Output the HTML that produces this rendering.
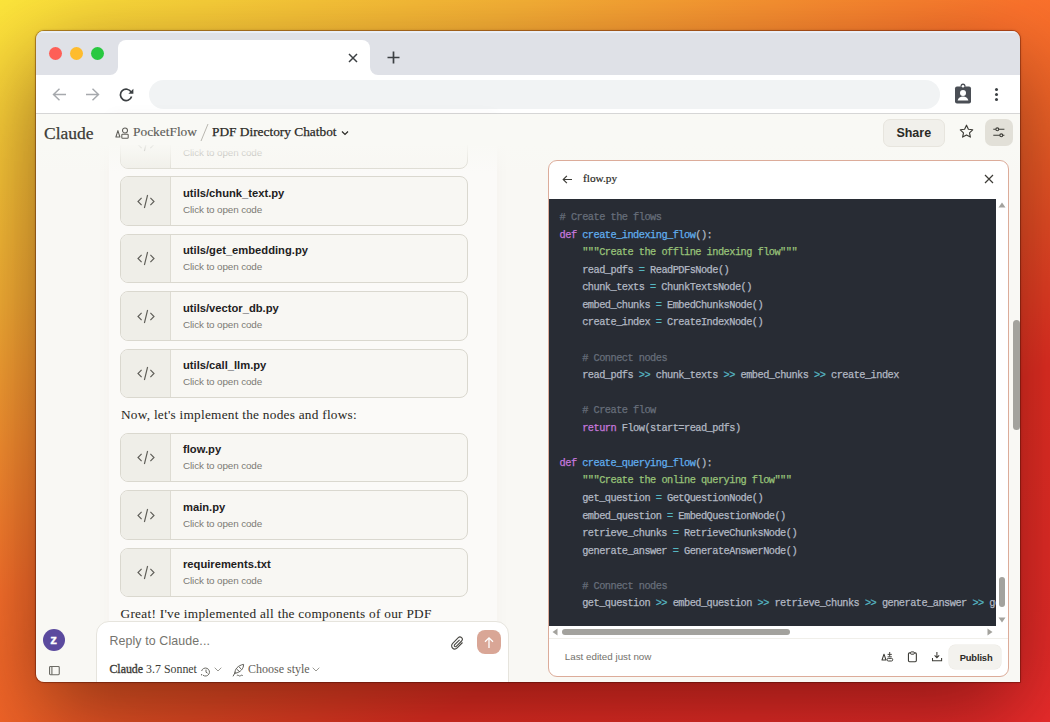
<!DOCTYPE html>
<html><head><meta charset="utf-8">
<style>
*{margin:0;padding:0;box-sizing:border-box}
html,body{width:1050px;height:722px;overflow:hidden}
body{position:relative;font-family:"Liberation Sans",sans-serif;
background:linear-gradient(150deg,#fde63b 0%,#f8b236 23%,#fc722c 45%,#f26428 55%,#ec5026 62%,#ea3024 73%,#ec2c2c 100%);}
.a{position:absolute}
.shadow{position:absolute;left:36px;top:31px;width:984px;height:651px;border-radius:8px 8px 0 8px;box-shadow:0 30px 90px 0 rgba(40,0,0,.5),0 0 3px rgba(60,10,0,.35),0 0 0 1px rgba(90,20,0,.35)}
.win{position:absolute;left:0;top:0;width:1050px;height:722px;clip-path:inset(31px 30px 40px 36px round 8px 8px 0 8px);}
.serif{font-family:"Liberation Serif",serif}
.mono{font-family:"Liberation Mono",monospace}
.card{position:absolute;left:120px;width:348px;height:49.5px;border:1px solid #dad8cf;border-radius:8px;background:#f8f7f3;overflow:hidden}
.card .ic{position:absolute;left:0;top:0;width:50px;height:100%;background:#efeee8;border-right:1px solid #dedcd3}
.card .ic svg{position:absolute;left:16px;top:16.5px}
.card .t{position:absolute;left:62px;top:8.5px;font-weight:700;font-size:11.2px;color:#22211d;white-space:nowrap;line-height:14px}
.card .s{position:absolute;left:62px;top:25.2px;font-size:9.9px;letter-spacing:-0.12px;color:#7b7a73;white-space:nowrap;line-height:14px}
.code{position:absolute;left:549px;top:198.5px;width:447px;height:427.2px;background:#282c34;overflow:hidden}
.code pre{position:absolute;left:10.6px;top:10.5px;font-family:"Liberation Mono",monospace;font-size:10.3px;letter-spacing:-0.525px;-webkit-text-stroke:0.25px currentColor;line-height:17.57px;color:#b2b8c3;white-space:pre}
.cm{color:#676e7a}.kw{color:#c678dd}.fn{color:#61aeee}.st{color:#98c379}.op{color:#56b6c2}
</style></head><body>
<div class="shadow"></div>
<div class="win">
  <!-- tab bar -->
  <div class="a" style="left:36px;top:31px;width:984px;height:44px;background:#dfe1e7"></div>
  <div class="a" style="left:36px;top:31px;width:984px;height:1.5px;background:#eaeff7"></div>
  <div class="a" style="left:49px;top:47.2px;width:13px;height:13px;border-radius:50%;background:#fe5f57"></div>
  <div class="a" style="left:70.2px;top:47.2px;width:13px;height:13px;border-radius:50%;background:#febc2e"></div>
  <div class="a" style="left:91.1px;top:47.2px;width:13px;height:13px;border-radius:50%;background:#28c840"></div>
  <!-- active tab -->
  <div class="a" style="left:118px;top:40px;width:252px;height:36px;background:#fff;border-radius:8px 8px 0 0"></div>
  <svg class="a" style="left:110px;top:67px" width="8" height="8"><path d="M8 0 V8 H0 A8 8 0 0 0 8 0Z" fill="#fff"/></svg>
  <svg class="a" style="left:370px;top:67px" width="8" height="8"><path d="M0 0 V8 H8 A8 8 0 0 1 0 0Z" fill="#fff"/></svg>
  <svg class="a" style="left:348px;top:52.7px" width="10" height="10"><path d="M1 1L9 9M9 1L1 9" stroke="#3c4043" stroke-width="1.5"/></svg>
  <svg class="a" style="left:386.7px;top:51px" width="13" height="13"><path d="M6.5 0.5V12.5M0.5 6.5H12.5" stroke="#3c4043" stroke-width="1.7"/></svg>
  <!-- toolbar -->
  <div class="a" style="left:36px;top:75px;width:984px;height:38px;background:#fff"></div>
  <svg class="a" style="left:51.5px;top:87.5px" width="15" height="14"><path d="M14 6.5H1.5M7.5 0.7L1.5 6.5L7.5 12.3" stroke="#a6a9ad" stroke-width="1.45" fill="none"/></svg>
  <svg class="a" style="left:85px;top:87.5px" width="15" height="14"><path d="M1 6.5H13.5M7.5 0.7L13.5 6.5L7.5 12.3" stroke="#a6a9ad" stroke-width="1.45" fill="none"/></svg>
  <svg class="a" style="left:118px;top:86.5px" width="17" height="15"><path d="M13.2 5.2A5.7 5.7 0 1 0 13.6 9.5" stroke="#3c4043" stroke-width="1.7" fill="none"/><path d="M15.4 1.8V6.8H10.4Z" fill="#3c4043"/></svg>
  <div class="a" style="left:149px;top:80px;width:790.5px;height:29px;border-radius:15px;background:#f1f3f4"></div>
  <svg class="a" style="left:954px;top:83px" width="18" height="21"><rect x="1" y="3.6" width="16" height="17" rx="2" fill="#4a4e55"/><circle cx="9" cy="3.1" r="2.5" fill="#4a4e55"/><circle cx="9" cy="3.3" r="1.3" fill="#fff"/><circle cx="9" cy="9.9" r="3" fill="#fff"/><path d="M3.6 17.6C4.2 14.7 6.4 13.6 9 13.6S13.8 14.7 14.4 17.6Z" fill="#fff"/></svg>
  <div class="a" style="left:995px;top:87.5px;width:3px;height:3px;border-radius:50%;background:#3c4043"></div>
  <div class="a" style="left:995px;top:92.8px;width:3px;height:3px;border-radius:50%;background:#3c4043"></div>
  <div class="a" style="left:995px;top:98.1px;width:3px;height:3px;border-radius:50%;background:#3c4043"></div>
  <div class="a" style="left:36px;top:112.5px;width:984px;height:1.5px;background:#d6d6d6"></div>

  <!-- page -->
  <div class="a" style="left:36px;top:114px;width:984px;height:570px;background:#f9f8f4"></div>
  <!-- chat column -->
  <div class="a" style="left:109px;top:114px;width:388px;height:570px;background:#fbfaf8;box-shadow:0 0 14px rgba(80,60,0,0.03)"></div>

  <!-- cards -->
  <div class="card" style="top:119.7px"><div class="ic"><svg width="18" height="15"><path d="M4.6 3.8L1 7.5L4.6 11.2M13.4 3.8L17 7.5L13.4 11.2M10.6 1L7.4 14" stroke="#5f5e58" stroke-width="1.15" fill="none"/></svg></div><div class="t">utils/pdf_reader.py</div><div class="s">Click to open code</div></div>
  <div class="card" style="top:176.4px"><div class="ic"><svg width="18" height="15"><path d="M4.6 3.8L1 7.5L4.6 11.2M13.4 3.8L17 7.5L13.4 11.2M10.6 1L7.4 14" stroke="#5f5e58" stroke-width="1.15" fill="none"/></svg></div><div class="t">utils/chunk_text.py</div><div class="s">Click to open code</div></div>
  <div class="card" style="top:233.9px"><div class="ic"><svg width="18" height="15"><path d="M4.6 3.8L1 7.5L4.6 11.2M13.4 3.8L17 7.5L13.4 11.2M10.6 1L7.4 14" stroke="#5f5e58" stroke-width="1.15" fill="none"/></svg></div><div class="t">utils/get_embedding.py</div><div class="s">Click to open code</div></div>
  <div class="card" style="top:291.4px"><div class="ic"><svg width="18" height="15"><path d="M4.6 3.8L1 7.5L4.6 11.2M13.4 3.8L17 7.5L13.4 11.2M10.6 1L7.4 14" stroke="#5f5e58" stroke-width="1.15" fill="none"/></svg></div><div class="t">utils/vector_db.py</div><div class="s">Click to open code</div></div>
  <div class="card" style="top:348.9px"><div class="ic"><svg width="18" height="15"><path d="M4.6 3.8L1 7.5L4.6 11.2M13.4 3.8L17 7.5L13.4 11.2M10.6 1L7.4 14" stroke="#5f5e58" stroke-width="1.15" fill="none"/></svg></div><div class="t">utils/call_llm.py</div><div class="s">Click to open code</div></div>
  <div class="a serif" style="left:121px;top:405.5px;font-size:13.3px;letter-spacing:0.25px;line-height:18px;color:#2b2a26;-webkit-text-stroke:0.05px #2b2a26;white-space:nowrap">Now, let's implement the nodes and flows:</div>
  <div class="card" style="top:432.9px"><div class="ic"><svg width="18" height="15"><path d="M4.6 3.8L1 7.5L4.6 11.2M13.4 3.8L17 7.5L13.4 11.2M10.6 1L7.4 14" stroke="#5f5e58" stroke-width="1.15" fill="none"/></svg></div><div class="t">flow.py</div><div class="s">Click to open code</div></div>
  <div class="card" style="top:490.4px"><div class="ic"><svg width="18" height="15"><path d="M4.6 3.8L1 7.5L4.6 11.2M13.4 3.8L17 7.5L13.4 11.2M10.6 1L7.4 14" stroke="#5f5e58" stroke-width="1.15" fill="none"/></svg></div><div class="t">main.py</div><div class="s">Click to open code</div></div>
  <div class="card" style="top:547.9px"><div class="ic"><svg width="18" height="15"><path d="M4.6 3.8L1 7.5L4.6 11.2M13.4 3.8L17 7.5L13.4 11.2M10.6 1L7.4 14" stroke="#5f5e58" stroke-width="1.15" fill="none"/></svg></div><div class="t">requirements.txt</div><div class="s">Click to open code</div></div>
  <div class="a serif" style="left:120.5px;top:604.6px;font-size:13.3px;letter-spacing:0.28px;line-height:18px;color:#2b2a26;-webkit-text-stroke:0.05px #2b2a26;white-space:nowrap">Great! I've implemented all the components of our PDF</div>

  <!-- header -->
  <div class="a" style="left:36px;top:114px;width:984px;height:31px;background:#f9f9f5"></div>
  <div class="a" style="left:36px;top:145px;width:984px;height:28px;background:linear-gradient(rgba(249,249,245,0.95) 0%,rgba(249,249,245,0.7) 30%,rgba(249,249,245,0))"></div>
  <div class="a serif" style="left:44px;top:123px;font-size:17.5px;line-height:20px;color:#3d3c37;-webkit-text-stroke:0.25px #3d3c37;white-space:nowrap">Claude</div>
  <svg class="a" style="left:115px;top:127px" width="14" height="12"><path d="M0.9 10L2.9 3.6L4.9 10Z" stroke="#5f5e58" stroke-width="1.05" fill="none" stroke-linejoin="round"/><circle cx="10" cy="3.4" r="2.5" stroke="#5f5e58" stroke-width="1.05" fill="none"/><rect x="6.8" y="7.3" width="6.4" height="3.9" rx="0.8" stroke="#5f5e58" stroke-width="1.05" fill="none"/></svg>
  <div class="a serif" style="left:133px;top:122.5px;font-size:13.4px;line-height:18px;color:#5f5e5a;-webkit-text-stroke:0.15px #5f5e5a;white-space:nowrap">PocketFlow</div>
  <svg class="a" style="left:200px;top:123px" width="9" height="19"><path d="M8 1L1 18" stroke="#b9b7b0" stroke-width="1"/></svg>
  <div class="a serif" style="left:212px;top:123px;font-size:13.35px;line-height:18px;color:#2a2925;-webkit-text-stroke:0.25px #2a2925;white-space:nowrap">PDF Directory Chatbot</div>
  <svg class="a" style="left:341px;top:130px" width="8" height="6"><path d="M1 1.5L4 4.5L7 1.5" stroke="#2a2925" stroke-width="1.2" fill="none"/></svg>

  <div class="a" style="left:883px;top:119px;width:62px;height:27.5px;border-radius:7px;background:#f1f0eb;border:1px solid #e7e5de"></div>
  <div class="a" style="left:896.4px;top:124px;font-size:12.5px;line-height:18px;font-weight:700;color:#2b2a26">Share</div>
  <svg class="a" style="left:958.8px;top:124.3px" width="16" height="15"><path d="M7.5 1.2L9.4 5.3L13.7 5.8L10.5 8.8L11.4 13.1L7.5 10.9L3.6 13.1L4.5 8.8L1.3 5.8L5.6 5.3Z" stroke="#3d3c37" stroke-width="1.15" fill="none" stroke-linejoin="round"/></svg>
  <div class="a" style="left:985px;top:119px;width:28px;height:27px;border-radius:7px;background:#e2e0d8"></div>
  <svg class="a" style="left:992px;top:125px" width="14" height="14"><path d="M1.3 4.3H12.4M1.3 10.3H12.4" stroke="#3d3c37" stroke-width="1.1"/><circle cx="5.3" cy="4.3" r="1.45" fill="#e2e0d8" stroke="#3d3c37" stroke-width="1.1"/><circle cx="9.3" cy="10.3" r="1.45" fill="#e2e0d8" stroke="#3d3c37" stroke-width="1.1"/></svg>

  <!-- code panel -->
  <div class="a" style="left:548px;top:160px;width:460.5px;height:516.5px;border:1px solid #dcac9a;border-radius:9px;background:#fff"></div>
  <svg class="a" style="left:562px;top:174.5px" width="11" height="9"><path d="M10 4.5H1.2M4.9 0.8L1.2 4.5L4.9 8.2" stroke="#3d3c37" stroke-width="1.15" fill="none"/></svg>
  <div class="a serif" style="left:583px;top:170px;font-size:11.3px;line-height:16px;color:#2a2925;-webkit-text-stroke:0.2px #2a2925">flow.py</div>
  <svg class="a" style="left:984px;top:174px" width="10" height="10"><path d="M1 1L9 9M9 1L1 9" stroke="#3d3c37" stroke-width="1.2"/></svg>

  <div class="code"><pre><span class="cm"># Create the flows</span>
<span class="kw">def</span> <span class="fn">create_indexing_flow</span>():
    <span class="st">"""Create the offline indexing flow"""</span>
    read_pdfs <span class="op">=</span> ReadPDFsNode()
    chunk_texts <span class="op">=</span> ChunkTextsNode()
    embed_chunks <span class="op">=</span> EmbedChunksNode()
    create_index <span class="op">=</span> CreateIndexNode()

    <span class="cm"># Connect nodes</span>
    read_pdfs <span class="op">&gt;&gt;</span> chunk_texts <span class="op">&gt;&gt;</span> embed_chunks <span class="op">&gt;&gt;</span> create_index

    <span class="cm"># Create flow</span>
    <span class="kw">return</span> Flow(start=read_pdfs)

<span class="kw">def</span> <span class="fn">create_querying_flow</span>():
    <span class="st">"""Create the online querying flow"""</span>
    get_question <span class="op">=</span> GetQuestionNode()
    embed_question <span class="op">=</span> EmbedQuestionNode()
    retrieve_chunks <span class="op">=</span> RetrieveChunksNode()
    generate_answer <span class="op">=</span> GenerateAnswerNode()

    <span class="cm"># Connect nodes</span>
    get_question <span class="op">&gt;&gt;</span> embed_question <span class="op">&gt;&gt;</span> retrieve_chunks <span class="op">&gt;&gt;</span> generate_answer <span class="op">&gt;&gt;</span> get_answer</pre></div>
  <!-- v scrollbar -->
  <svg class="a" style="left:997.5px;top:201.5px" width="8" height="6"><path d="M4 0.5L7.5 5.5H0.5Z" fill="#a3a29d"/></svg>
  <div class="a" style="left:998.7px;top:577px;width:6px;height:30px;border-radius:3px;background:#a3a29d"></div>
  <svg class="a" style="left:997.7px;top:617px" width="8" height="6"><path d="M0.5 0.5H7.5L4 5.5Z" fill="#a3a29d"/></svg>
  <!-- h scrollbar -->
  <svg class="a" style="left:551.5px;top:628px" width="6" height="8"><path d="M5.5 0.5V7.5L0.5 4Z" fill="#a3a29d"/></svg>
  <div class="a" style="left:562.3px;top:629.2px;width:228px;height:6px;border-radius:3px;background:#a3a29d"></div>
  <svg class="a" style="left:987px;top:628.3px" width="6" height="8"><path d="M0.5 0.5V7.5L5.5 4Z" fill="#a3a29d"/></svg>
  <div class="a" style="left:549px;top:638px;width:459px;height:1px;background:#f0efea"></div>
  <!-- footer -->
  <div class="a" style="left:564.8px;top:650px;font-size:9.8px;line-height:13px;color:#73726c;white-space:nowrap">Last edited just now</div>
  <svg class="a" style="left:880px;top:650px" width="15" height="13"><path d="M2 10L4 4.2L6 10Z" stroke="#3d3c37" stroke-width="1.05" fill="none" stroke-linejoin="round"/><path d="M9.7 2V6.6M7.6 4.4H11.8M7.6 6.8H11.8" stroke="#3d3c37" stroke-width="0.95"/><rect x="7.1" y="8.4" width="5.6" height="2.6" rx="1.2" stroke="#3d3c37" stroke-width="1" fill="none"/></svg>
  <svg class="a" style="left:906px;top:650px" width="12" height="13"><rect x="2.45" y="2.9" width="7.9" height="8.8" rx="1.1" stroke="#3d3c37" stroke-width="1.1" fill="none"/><rect x="4.6" y="1.9" width="3.6" height="2.3" rx="0.6" stroke="#3d3c37" stroke-width="1" fill="#fff"/></svg>
  <svg class="a" style="left:930px;top:650px" width="14" height="13"><path d="M6.9 2V7.6M4.6 5.4L6.9 7.7L9.2 5.4" stroke="#3d3c37" stroke-width="1.05" fill="none"/><path d="M2.5 8V10.7H11.6V8" stroke="#3d3c37" stroke-width="1.05" fill="none"/></svg>
  <div class="a" style="left:949.3px;top:645px;width:52px;height:24px;border-radius:6px;background:#f3f2ee;box-shadow:0 0 0 0.5px #ebe9e3"></div>
  <div class="a" style="left:959.7px;top:650.5px;font-size:9.4px;letter-spacing:-0.15px;line-height:14px;font-weight:700;color:#2b2a26">Publish</div>

  <!-- page scrollbar -->
  <div class="a" style="left:1013px;top:320px;width:6.5px;height:109.5px;border-radius:3.5px;background:#a3a29d"></div>

  <!-- sidebar -->
  <div class="a" style="left:42.8px;top:629px;width:22px;height:22px;border-radius:50%;background:#5b4a9e"></div>
  <div class="a" style="left:42.6px;top:632.5px;width:22px;text-align:center;font-size:13.5px;line-height:14px;font-weight:700;color:#fff;-webkit-text-stroke:0.3px #fff">z</div>
  <svg class="a" style="left:48.5px;top:665.5px" width="11" height="10"><rect x="0.55" y="0.55" width="9.7" height="8.2" rx="0.9" stroke="#6b6a64" stroke-width="1.1" fill="none"/><path d="M2.9 0.6V8.7" stroke="#6b6a64" stroke-width="1.1"/></svg>

  <!-- reply box -->
  <div class="a" style="left:95.7px;top:621px;width:413.5px;height:80px;border:1px solid #e6e4dd;border-radius:13px;background:#fff"></div>
  <div class="a" style="left:109.4px;top:632.5px;font-size:12.4px;letter-spacing:0.12px;line-height:16px;color:#75746e;white-space:nowrap">Reply to Claude...</div>
  <svg class="a" style="left:451px;top:636px" width="14" height="15"><path d="M11.5 6.5L6.2 11.8C4.8 13.2 2.7 13.2 1.5 12C0.3 10.8 0.3 8.7 1.7 7.3L7.3 1.7C8.2 0.8 9.7 0.8 10.6 1.7C11.5 2.6 11.5 4.1 10.6 5L5.3 10.3C4.8 10.8 4 10.8 3.6 10.4C3.2 10 3.2 9.2 3.7 8.7L8.6 3.8" stroke="#4a4944" stroke-width="1.1" fill="none"/></svg>
  <div class="a" style="left:477.1px;top:630.2px;width:24.2px;height:24px;border-radius:8px;background:#d9a696"></div>
  <svg class="a" style="left:483px;top:635.5px" width="12" height="13"><path d="M6 12V2M2 5.8L6 1.8L10 5.8" stroke="#fff" stroke-width="1.3" fill="none"/></svg>
  <div class="a serif" style="left:109.4px;top:661px;font-size:11.9px;line-height:16px;color:#3d3c37;white-space:nowrap"><span style="-webkit-text-stroke:0.35px #3d3c37">Claude</span> 3.7 Sonnet</div>
  <svg class="a" style="left:200px;top:666px" width="11" height="11"><path d="M3 9.2A4 4 0 1 0 1.6 5" stroke="#6b6a64" stroke-width="1" fill="none"/><path d="M6 3.6V6.2L7.6 7.2" stroke="#6b6a64" stroke-width="1" fill="none"/><circle cx="1.6" cy="8.8" r="0.7" fill="#6b6a64"/></svg>
  <svg class="a" style="left:214px;top:667px" width="8" height="5"><path d="M0.7 0.7L4 4L7.3 0.7" stroke="#9a9993" stroke-width="1" fill="none"/></svg>
  <svg class="a" style="left:232px;top:663px" width="13" height="14"><path d="M1.2 13L3.3 9.2M2.8 10.6C2.6 6.2 5.8 2.4 11.6 1.4C11.6 5.6 8.6 9.3 3.6 10.2M5.2 6.6L7.2 8.3M7.4 4.3L9 5.8" stroke="#5f5e58" stroke-width="1" fill="none" stroke-linecap="round"/><path d="M4.8 12.6q1-1 2 0q1 1 2 0q1-1 2 0" stroke="#5f5e58" stroke-width="0.9" fill="none"/></svg>
  <div class="a serif" style="left:248px;top:661px;font-size:12px;line-height:16px;color:#5f5e58;white-space:nowrap">Choose style</div>
  <svg class="a" style="left:312px;top:667px" width="8" height="5"><path d="M0.7 0.7L4 4L7.3 0.7" stroke="#9a9993" stroke-width="1" fill="none"/></svg>
</div>
</body></html>
